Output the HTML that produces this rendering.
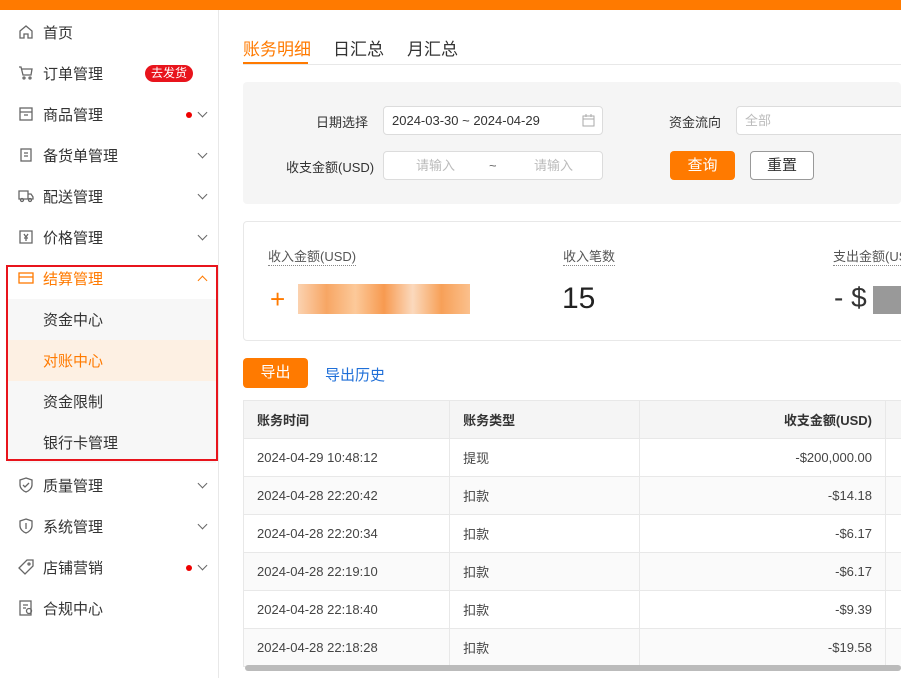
<!DOCTYPE html>
<html><head><meta charset="utf-8"><style>
*{box-sizing:border-box;margin:0;padding:0}
body{width:901px;height:678px;overflow:hidden;background:#fff;font-family:"Liberation Sans","Noto Sans CJK SC",sans-serif;color:#333;position:relative}
.top{position:absolute;left:0;top:0;width:901px;height:10px;background:#ff7a00}
.side{position:absolute;left:0;top:10px;width:219px;height:668px;border-right:1px solid #e8e8e8;background:#fff}
.mi{position:absolute;left:0;width:218px;height:41px;font-size:15px;color:#333;display:flex;align-items:center}
.mi svg{position:absolute;left:18px;top:13px}
.mi .t{position:absolute;left:43px;top:11px}
.chev{position:absolute;left:199px;width:7px;height:7px;border-right:1.3px solid #666;border-bottom:1.3px solid #666;transform:rotate(45deg);top:16px}
.dot{position:absolute;left:186px;top:19px;width:6px;height:6px;border-radius:3px;background:#e00}
.sub{position:absolute;left:8px;width:208px;height:41px;background:#f7f7f7;font-size:15px;padding-left:35px;line-height:43px}
.abs{position:absolute}
.tab{position:absolute;top:35px;font-size:17px}
.lbl{position:absolute;font-size:13px;color:#333}
.inp{position:absolute;height:29px;border:1px solid #dcdcdc;border-radius:4px;background:#fff;font-size:13px;line-height:27px}
td,th{border-right:1px solid #e8e8e8;border-bottom:1px solid #e8e8e8;font-size:13px;height:38px;padding:0 13px;text-align:left;font-weight:normal;color:#444}
th{font-weight:bold;background:#f5f5f5;color:#333}
tr:nth-child(odd) td{background:#fafafa}
</style></head><body>
<div class="top"></div>
<div class="side">
 <div class="mi" style="top:1px"><svg width="16" height="16" viewBox="0 0 16 16" fill="none" stroke="#666" stroke-width="1.3"><path d="M2 7L8 2l6 5v7h-4v-4H6v4H2z"/></svg><span class="t">首页</span></div>
 <div class="mi" style="top:42px"><svg width="16" height="16" viewBox="0 0 16 16" fill="none" stroke="#666" stroke-width="1.3"><path d="M1 2h2l2 8h8l1-6H4"/><circle cx="6" cy="13" r="1"/><circle cx="12" cy="13" r="1"/></svg><span class="t">订单管理</span><span class="abs" style="left:145px;top:13px;background:#e8141c;color:#fff;font-size:12px;border-radius:9px;padding:0 6px;height:17px;line-height:17px">去发货</span></div>
 <div class="mi" style="top:83px"><svg width="16" height="16" viewBox="0 0 16 16" fill="none" stroke="#666" stroke-width="1.3"><rect x="2" y="2" width="12" height="12"/><path d="M2 6h12M6 9h4"/></svg><span class="t">商品管理</span><span class="dot"></span><span class="chev"></span></div>
 <div class="mi" style="top:124px"><svg width="16" height="16" viewBox="0 0 16 16" fill="none" stroke="#666" stroke-width="1.3"><rect x="3" y="2" width="10" height="12"/><path d="M6 6h4M6 9h4"/></svg><span class="t">备货单管理</span><span class="chev"></span></div>
 <div class="mi" style="top:165px"><svg width="16" height="16" viewBox="0 0 16 16" fill="none" stroke="#666" stroke-width="1.3"><path d="M1 3h9v8H1zM10 6h3l2 3v2h-5"/><circle cx="4" cy="12" r="1.5"/><circle cx="12" cy="12" r="1.5"/></svg><span class="t">配送管理</span><span class="chev"></span></div>
 <div class="mi" style="top:206px"><svg width="16" height="16" viewBox="0 0 16 16" fill="none" stroke="#666" stroke-width="1.3"><path d="M2 2h12v12H2zM6 5l2 3 2-3M8 8v4M6 9h4"/></svg><span class="t">价格管理</span><span class="chev"></span></div>
 <div class="mi" style="top:247px;color:#ff7a00"><svg width="16" height="16" viewBox="0 0 16 16" fill="none" stroke="#ff7a00" stroke-width="1.3"><rect x="1" y="3" width="14" height="10"/><path d="M1 7h14"/></svg><span class="t">结算管理</span><span class="chev" style="transform:rotate(-135deg);top:20px;border-color:#ff7a00"></span></div>
 <div class="sub" style="top:289px">资金中心</div>
 <div class="sub" style="top:330px;background:#fdf0e3;color:#ff7a00">对账中心</div>
 <div class="sub" style="top:371px">资金限制</div>
 <div class="sub" style="top:412px">银行卡管理</div>
 <div class="abs" style="left:6px;top:255px;width:212px;height:196px;border:2px solid #e8141c"></div>
 <div class="mi" style="top:454px"><svg width="16" height="16" viewBox="0 0 16 16" fill="none" stroke="#666" stroke-width="1.3"><path d="M8 1l6 2v5c0 3-3 6-6 7-3-1-6-4-6-7V3z"/><path d="M5 8l2 2 4-4"/></svg><span class="t">质量管理</span><span class="chev"></span></div>
 <div class="mi" style="top:495px"><svg width="16" height="16" viewBox="0 0 16 16" fill="none" stroke="#666" stroke-width="1.3"><path d="M8 1l6 2v5c0 3-3 6-6 7-3-1-6-4-6-7V3z"/><path d="M8 5v6"/></svg><span class="t">系统管理</span><span class="chev"></span></div>
 <div class="mi" style="top:536px"><svg width="16" height="16" viewBox="0 0 16 16" fill="none" stroke="#666" stroke-width="1.3"><path d="M9 1h6v6l-8 8-6-6z"/><circle cx="11" cy="5" r="1"/></svg><span class="t">店铺营销</span><span class="dot"></span><span class="chev"></span></div>
 <div class="mi" style="top:577px"><svg width="16" height="16" viewBox="0 0 16 16" fill="none" stroke="#666" stroke-width="1.3"><rect x="2" y="1" width="11" height="14"/><path d="M5 5h5M5 8h3"/><circle cx="11" cy="11" r="2.5"/></svg><span class="t">合规中心</span></div>
</div>

<div class="tab" style="left:243px;color:#ff7a00">账务明细</div>
<div class="tab" style="left:333px">日汇总</div>
<div class="tab" style="left:407px">月汇总</div>
<div class="abs" style="left:243px;top:64px;width:658px;height:1px;background:#e8e8e8"></div>
<div class="abs" style="left:243px;top:62px;width:65px;height:2px;background:#ff7a00"></div>

<div class="abs" style="left:243px;top:82px;width:658px;height:122px;background:#f5f5f5;border-radius:4px"></div>
<div class="lbl" style="left:316px;top:112px">日期选择</div>
<div class="inp" style="left:383px;top:106px;width:220px;padding-left:8px">2024-03-30 ~ 2024-04-29<svg class="abs" style="left:198px;top:7px" width="13" height="13" viewBox="0 0 13 13" fill="none" stroke="#aaa"><rect x="1" y="2" width="11" height="10"/><path d="M1 5h11M4 0v3M9 0v3"/></svg></div>
<div class="lbl" style="left:669px;top:112px">资金流向</div>
<div class="inp" style="left:736px;top:106px;width:180px;padding-left:8px;color:#bbb">全部</div>
<div class="lbl" style="left:286px;top:157px">收支金额(USD)</div>
<div class="inp" style="left:383px;top:151px;width:220px;color:#bbb"><span class="abs" style="left:32px">请输入</span><span class="abs" style="left:105px;color:#666">~</span><span class="abs" style="left:150px">请输入</span></div>
<div class="abs" style="left:670px;top:151px;width:65px;height:29px;background:#ff7a00;border-radius:4px;color:#fff;font-size:15px;text-align:center;line-height:29px">查询</div>
<div class="abs" style="left:750px;top:151px;width:64px;height:29px;border:1px solid #999;border-radius:4px;font-size:15px;text-align:center;line-height:27px;background:#fff">重置</div>

<div class="abs" style="left:243px;top:221px;width:670px;height:120px;border:1px solid #e8e8e8;border-radius:4px"></div>
<div class="lbl" style="left:268px;top:246px;color:#555;border-bottom:1px dotted #888">收入金额(USD)</div>
<div class="lbl" style="left:563px;top:246px;color:#555;border-bottom:1px dotted #888">收入笔数</div>
<div class="lbl" style="left:833px;top:246px;color:#555;border-bottom:1px dotted #888;white-space:nowrap">支出金额(USD)</div>
<div class="abs" style="left:270px;top:284px;font-size:26px;color:#ff7a00">+</div>
<div class="abs" style="left:298px;top:284px;width:172px;height:30px;background:linear-gradient(90deg,#fbd2b0,#f7a664,#fcc99a,#f79a50,#fbd9bd,#f7a058,#fbc08c)"></div>
<div class="abs" style="left:562px;top:282px;font-size:30px;color:#222">15</div>
<div class="abs" style="left:834px;top:282px;font-size:28px;color:#333">- $</div>
<div class="abs" style="left:873px;top:286px;width:28px;height:28px;background:#999"></div>

<div class="abs" style="left:243px;top:358px;width:65px;height:30px;background:#ff7a00;border-radius:4px;color:#fff;font-size:15px;text-align:center;line-height:30px">导出</div>
<div class="abs" style="left:325px;top:364px;font-size:15px;color:#1f6fd8">导出历史</div>

<table class="abs" style="left:243px;top:400px;width:670px;border-collapse:collapse;border-left:1px solid #e8e8e8;border-top:1px solid #e8e8e8">
<colgroup><col style="width:207px"><col style="width:191px"><col style="width:247px"><col></colgroup>
<tr><th>账务时间</th><th>账务类型</th><th style="text-align:right">收支金额(USD)</th><th></th></tr>
<tr><td>2024-04-29 10:48:12</td><td>提现</td><td style="text-align:right">-$200,000.00</td><td></td></tr>
<tr><td>2024-04-28 22:20:42</td><td>扣款</td><td style="text-align:right">-$14.18</td><td></td></tr>
<tr><td>2024-04-28 22:20:34</td><td>扣款</td><td style="text-align:right">-$6.17</td><td></td></tr>
<tr><td>2024-04-28 22:19:10</td><td>扣款</td><td style="text-align:right">-$6.17</td><td></td></tr>
<tr><td>2024-04-28 22:18:40</td><td>扣款</td><td style="text-align:right">-$9.39</td><td></td></tr>
<tr><td>2024-04-28 22:18:28</td><td>扣款</td><td style="text-align:right">-$19.58</td><td></td></tr>
</table>
<div class="abs" style="left:245px;top:665px;width:656px;height:6px;background:#bbb;border-radius:3px"></div>
</body></html>
